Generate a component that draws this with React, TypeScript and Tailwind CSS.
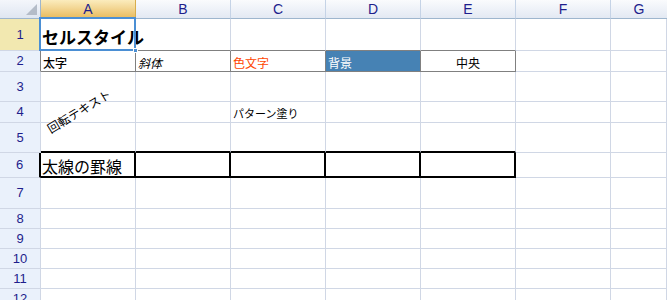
import React from "react";

const COLS = ["A", "B", "C", "D", "E", "F", "G"];
const ROW_H = [
  "h-[32px]", "h-[21px]", "h-[30px]", "h-[21px]", "h-[30px]", "h-[25px]",
  "h-[31px]", "h-[20px]", "h-[20px]", "h-[20px]", "h-[20px]", "h-[20px]",
];
const jp = "font-['Noto_Sans_CJK_JP','Noto_Sans',sans-serif]";
const grid = "border-r border-b border-r-[#d0d7e5] border-b-[#d0d7e5]";

// cell borders: gray box on row 2, thick black box on row 6
function cellBorder(r: number, c: number): string {
  if (c > 4) return grid;
  if (r === 0) return "border-r border-b border-r-[#d0d7e5] border-b-[#808080]";
  if (r === 1) return "border-r border-b border-[#808080]";
  if (r === 4) return "border-r border-b-2 border-r-[#d0d7e5] border-b-black";
  if (r === 5) return "border-r-2 border-b-2 border-black";
  return grid;
}

function headBorder(r: number): string {
  if (r === 1) return "border-r border-b border-r-[#808080] border-b-[#d0d7e5]";
  if (r === 5) return "border-r-2 border-b border-r-black border-b-[#d0d7e5]";
  return "border-r border-b border-[#d0d7e5]";
}

function Content({ r, c }: { r: number; c: number }) {
  if (r === 0 && c === 0)
    return (
      <>
        <span className={`absolute left-[1px] bottom-[5px] z-10 whitespace-nowrap text-[17px] font-bold leading-none text-black ${jp}`}>
          セルスタイル
        </span>
        <div className="absolute -left-[2px] -top-[2px] z-20 h-[34px] w-[97px] border-2 border-[#4b8fd4]" />
        <div className="absolute -right-[3px] -bottom-[3px] z-30 h-[5px] w-[5px] border border-white bg-[#4b8fd4]" />
      </>
    );
  if (r === 1) {
    const base = `flex h-full w-full items-end px-[2px] pb-[2px] text-[12px] leading-none ${jp}`;
    if (c === 0) return <div className={`${base} font-medium text-black`}>太字</div>;
    if (c === 1) return <div className={`${base} italic text-black`}>斜体</div>;
    if (c === 2) return <div className={`${base} text-[#ff4500]`}>色文字</div>;
    if (c === 3) return <div className={`${base} bg-[#4682b4] text-white`}>背景</div>;
    if (c === 4) return <div className={`${base} justify-center text-black`}>中央</div>;
  }
  if (r === 3 && c === 0)
    return (
      <span className={`absolute left-[2px] top-[3px] z-10 -rotate-[31deg] whitespace-nowrap text-[12px] leading-none text-black ${jp}`}>
        回転テキスト
      </span>
    );
  if (r === 3 && c === 2)
    return (
      <div className={`flex h-full items-end whitespace-nowrap px-[2px] pb-[3px] text-[11px] leading-none text-black ${jp}`}>
        パターン塗り
      </div>
    );
  if (r === 5 && c === 0)
    return (
      <div className={`flex h-full items-end whitespace-nowrap px-[1px] pb-[2px] text-[16px] leading-none text-black ${jp}`}>
        太線の罫線
      </div>
    );
  return null;
}

export default function App() {
  return (
    <div className="h-[300px] w-[667px] overflow-hidden bg-white font-['Liberation_Sans',Arial,sans-serif]">
      <div className="flex h-[19px]">
        <div className="flex h-full w-[41px] shrink-0 items-end justify-end border-r border-b border-[#9eb6ce] bg-gradient-to-b from-[#f4f6fb] to-[#dfe6f1] p-[3px]">
          <svg width="11" height="11" viewBox="0 0 11 11">
            <polygon points="11,0 11,11 0,11" fill="#b4bcc8" />
          </svg>
        </div>
        {COLS.map((c, i) => (
          <div
            key={c}
            className={`flex h-full shrink-0 items-center justify-center border-b text-[14px] text-[#1e1e8c] ${
              i === 6 ? "flex-1" : "w-[95px] border-r"
            } ${
              i === 0
                ? "border-r-[#d8ad4c] border-b-[#c9a24a] bg-gradient-to-b from-[#fbecbd] to-[#e8bb5c]"
                : "border-r-[#c5d3e6] border-b-[#9eb6ce] bg-gradient-to-b from-[#fafbfd] to-[#e3e9f3]"
            }`}
          >
            {c}
          </div>
        ))}
      </div>
      {ROW_H.map((h, r) => (
        <div key={r} className={`flex ${h}`}>
          <div
            className={`flex h-full w-[41px] shrink-0 items-center justify-center text-[13px] text-[#1e1e8c] ${headBorder(r)} ${
              r === 0 ? "bg-[#f2e8b0]" : "bg-[#eaf1fb]"
            }`}
          >
            {r + 1}
          </div>
          {COLS.map((c, ci) => (
            <div key={c} className={`relative h-full shrink-0 ${ci === 6 ? "flex-1" : "w-[95px]"} ${cellBorder(r, ci)}`}>
              <Content r={r} c={ci} />
            </div>
          ))}
        </div>
      ))}
    </div>
  );
}
